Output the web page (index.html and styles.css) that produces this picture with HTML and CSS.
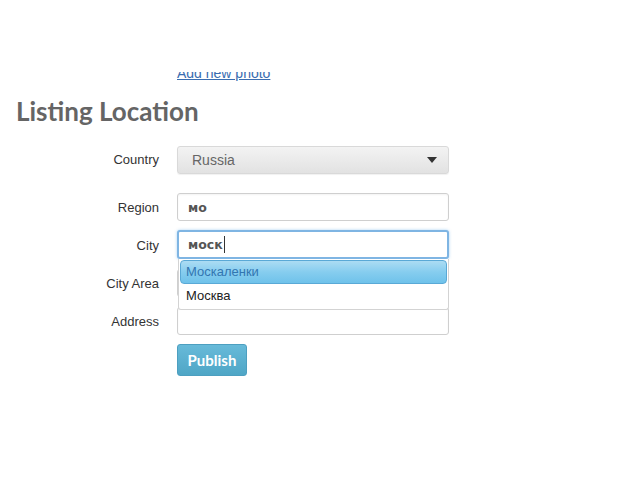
FILE: index.html
```html
<!DOCTYPE html>
<html>
<head>
<meta charset="utf-8">
<link rel="stylesheet" href="styles.css">
</head>
<body>
<div class="page">
  <div class="photo-clip"><a class="photo-link" href="#">Add new photo</a></div>
  <h2 class="title">Listing Location</h2>
  <div class="form">
    <label class="lbl row-country">Country</label>
    <div class="select row-country">
      <span>Russia</span>
      <svg class="caret" width="10" height="6" viewBox="0 0 10 6"><path d="M0 0H10L5 6Z" fill="#333"/></svg>
    </div>

    <label class="lbl">Region</label>
    <div class="field"><span class="val">мо</span></div>

    <label class="lbl">City</label>
    <div class="field city">
      <span class="val">моск</span><span class="cursor"></span>
      <div class="suggest">
        <div class="item active">Москаленки</div>
        <div class="item">Москва</div>
      </div>
    </div>

    <label class="lbl">City Area</label>
    <div class="field"></div>

    <label class="lbl">Address</label>
    <div class="field"></div>

    <span></span>
    <div class="actions"><button class="publish">Publish</button></div>
  </div>
</div>
</body>
</html>
```
FILE: styles.css
```css
html, body { margin: 0; padding: 0; background: #fff; }
.page { padding-top: 72px; font-family: "Liberation Sans", Arial, sans-serif; }
.photo-clip {
  height: 10px; overflow: hidden; display: flex; align-items: flex-end;
  padding-left: 177px;
}
.photo-link {
  font-family: "Liberation Sans", Arial, sans-serif; font-size: 14px; line-height: 17px;
  color: #3a6db0; text-decoration: underline; flex: none;
}
.title {
  margin: 13px 0 0 16px; font-family: Lato, "Open Sans", sans-serif; font-weight: 700;
  font-size: 26px; line-height: 32px; color: #656565;
}
.form {
  margin-top: 19px;
  display: grid; grid-template-columns: 159px 272px; column-gap: 18px; row-gap: 10px;
  align-items: center;
}
.lbl { text-align: right; font-size: 13px; color: #333; }
.lbl.row-country { align-self: start; line-height: 28px; }
.select {
  height: 26px; border: 1px solid #d9d9d9; border-radius: 3px;
  background: linear-gradient(#f3f3f3, #e2e2e2);
  display: flex; align-items: center; justify-content: space-between;
  padding: 0 11px 0 14px; font-size: 14px; color: #666;
  margin-bottom: 9px;
  box-shadow: 0 1px 1px rgba(0,0,0,0.06);
}
.caret { display: block; }
.field {
  height: 26px; border: 1px solid #cfcfcf; border-radius: 3px; background: #fff;
  display: flex; align-items: center; padding: 0 10px; position: relative;
  box-shadow: inset 0 1px 2px rgba(0,0,0,0.05);
}
.field.city {
  border: 2px solid #7fb5e3; height: 25px; padding: 0 9px; margin-top: -1px;
  box-shadow: 0 0 3px rgba(82,168,236,0.5);
}
.val { font-family: "DejaVu Sans", sans-serif; font-weight: 700; font-size: 12.5px; color: #555; }
.cursor { width: 1px; height: 17px; background: #333; margin-left: 1px; }
.suggest {
  position: absolute; left: -1px; right: -2px; top: 27px;
  background: #fff; border: 1px solid #d3d3d3; border-top: none; border-radius: 0 0 3px 3px;
  padding: 1px 1px 3px 1px; z-index: 2;
}
.item { height: 21px; line-height: 21px; font-size: 13px; color: #222; padding-left: 6px; }
.item.active {
  height: 22px; line-height: 21px;
  background: linear-gradient(#acdcf3, #86cdef 50%, #6fc2ea);
  border: 1px solid #5aa9d6; border-radius: 4px; color: #3276b1; padding-left: 5px;
  margin-bottom: 1px;
}
.publish {
  width: 70px; height: 32px; border: 1px solid #4d9fc0; border-radius: 3px;
  background: linear-gradient(#67bad9, #4fa6c6);
  color: #fff; font-family: Lato, "Open Sans", sans-serif; font-weight: 700; font-size: 15px;
  padding: 0; margin-top: -1px; display: block;
}
```
